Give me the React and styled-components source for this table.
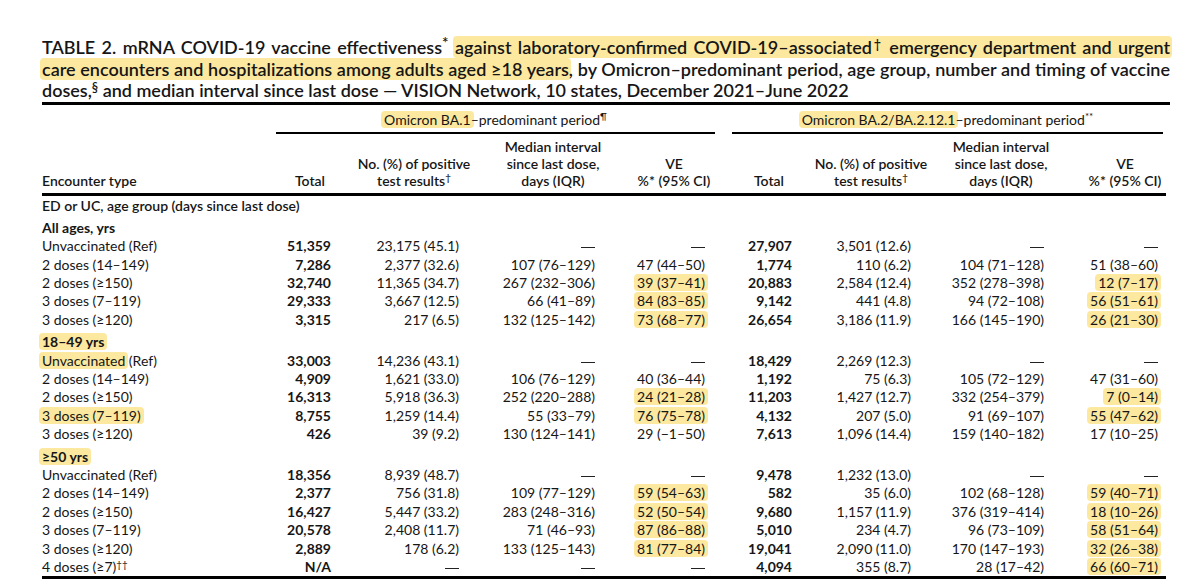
import React from "react";
import styled, { createGlobalStyle } from "styled-components";

const GlobalStyle = createGlobalStyle`
  html, body {
    margin: 0;
    padding: 0;
    background: #ffffff;
  }
  body {
    font-family: Lato, "Open Sans", sans-serif;
    color: #161616;
  }
`;

const GRID = "208px 81px 140px 157px 83px 81px 139px 119px 116px";

// per column: data padding-right, header alignment and shifts
const COLS = [
    { pr: 0, halign: "left", hpl: 0, hpr: 0 },
    { pr: 0, halign: "right", hpl: 0, hpr: 6 },
    { pr: 12, halign: "center", hpl: 26, hpr: 0 },
    { pr: 33, halign: "center", hpl: 7, hpr: 0 },
    { pr: 6, halign: "center", hpl: 9, hpr: 0 },
    { pr: 0, halign: "right", hpl: 0, hpr: 8 },
    { pr: 20, halign: "center", hpl: 19, hpr: 0 },
    { pr: 6, halign: "center", hpl: 21, hpr: 0 },
    { pr: 8, halign: "center", hpl: 34, hpr: 0 },
];

const Page = styled.div`
    width: 1200px;
    height: 582px;
    overflow: hidden;
    box-sizing: border-box;
    padding: 37px 0 0 42px;
`;

const Title = styled.div`
    width: 1128px;
    font-size: 18px;
    font-weight: 600;
    line-height: 21.5px;
    border-bottom: 3px solid #000;
`;

const TitleLine = styled.div`
    text-align: left;
    text-align-last: ${(p) => (p.$justify ? "justify" : "left")};
`;

const Mark = styled.span`
    background: #fce89f;
    border-radius: 4px;
    padding: 0 ${(p) => p.$px ?? 3}px;
    margin: 0 -${(p) => p.$px ?? 3}px;
    box-decoration-break: clone;
`;

const Sup = styled.span`
    position: relative;
    top: -0.42em;
    font-size: ${(p) => p.$size || 0.7}em;
    line-height: 0;
`;

const Dash = styled.span`
    display: inline-block;
    width: 14px;
    height: 0;
    border-top: 1.2px solid #222;
    vertical-align: middle;
`;

const Table = styled.div`
    width: 1124px;
    font-size: 14px;
    border-bottom: 3px solid #000;
`;

const GroupRow = styled.div`
    display: grid;
    grid-template-columns: 208px 461px 455px;
    padding-top: 6px;
`;

const GroupHead = styled.div`
    grid-column: ${(p) => p.$col};
    margin: 0 ${(p) => p.$mr}px 0 ${(p) => p.$ml}px;
    text-align: center;
    line-height: 17px;
    padding-bottom: 4px;
    border-bottom: 2.5px solid #000;
`;

const HeadRow = styled.div`
    display: grid;
    grid-template-columns: ${GRID};
    align-items: end;
    margin-top: 4px;
    padding-bottom: 4px;
    border-bottom: 3px solid #000;
    font-weight: 600;
    line-height: 17px;
`;

const HeadCell = styled.div`
    text-align: ${(p) => p.$align};
    padding-left: ${(p) => p.$pl}px;
    padding-right: ${(p) => p.$pr}px;
    white-space: nowrap;
`;

const CategoryRow = styled.div`
    height: 18.4px;
    line-height: 18.4px;
    margin-top: 1px;
    font-weight: 600;
`;

const SectionRow = styled.div`
    height: 18.4px;
    line-height: 18.4px;
    margin-top: ${(p) => p.$mt}px;
    font-weight: 700;
`;

const Row = styled.div`
    display: grid;
    grid-template-columns: ${GRID};
    height: 18.4px;
    line-height: 18.4px;
    white-space: nowrap;
`;

const Cell = styled.div`
    text-align: ${(p) => (p.$left ? "left" : "right")};
    padding-right: ${(p) => p.$pr}px;
    font-weight: ${(p) => (p.$bold ? 700 : 400)};
`;

const D = "—";

const sections = [
    {
        label: "All ages, yrs",
        hl: false,
        mt: 4,
        rows: [
            ["Unvaccinated (Ref)", "51,359", "23,175 (45.1)", D, D, "27,907", "3,501 (12.6)", D, D],
            ["2 doses (14–149)", "7,286", "2,377 (32.6)", "107 (76–129)", "47 (44–50)", "1,774", "110 (6.2)", "104 (71–128)", "51 (38–60)"],
            ["2 doses (≥150)", "32,740", "11,365 (34.7)", "267 (232–306)", "!39 (37–41)", "20,883", "2,584 (12.4)", "352 (278–398)", "!12 (7–17)"],
            ["3 doses (7–119)", "29,333", "3,667 (12.5)", "66 (41–89)", "!84 (83–85)", "9,142", "441 (4.8)", "94 (72–108)", "!56 (51–61)"],
            ["3 doses (≥120)", "3,315", "217 (6.5)", "132 (125–142)", "!73 (68–77)", "26,654", "3,186 (11.9)", "166 (145–190)", "!26 (21–30)"],
        ],
    },
    {
        label: "18–49 yrs",
        hl: true,
        mt: 4,
        rows: [
            [[<Mark key="m">Unvaccinated</Mark>, " (Ref)"], "33,003", "14,236 (43.1)", D, D, "18,429", "2,269 (12.3)", D, D],
            ["2 doses (14–149)", "4,909", "1,621 (33.0)", "106 (76–129)", "40 (36–44)", "1,192", "75 (6.3)", "105 (72–129)", "47 (31–60)"],
            ["2 doses (≥150)", "16,313", "5,918 (36.3)", "252 (220–288)", "!24 (21–28)", "11,203", "1,427 (12.7)", "332 (254–379)", "!7 (0–14)"],
            ["!3 doses (7–119)", "8,755", "1,259 (14.4)", "55 (33–79)", "!76 (75–78)", "4,132", "207 (5.0)", "91 (69–107)", "!55 (47–62)"],
            ["3 doses (≥120)", "426", "39 (9.2)", "130 (124–141)", "29 (−1–50)", "7,613", "1,096 (14.4)", "159 (140–182)", "17 (10–25)"],
        ],
    },
    {
        label: "≥50 yrs",
        hl: true,
        mt: 4,
        rows: [
            ["Unvaccinated (Ref)", "18,356", "8,939 (48.7)", D, D, "9,478", "1,232 (13.0)", D, D],
            ["2 doses (14–149)", "2,377", "756 (31.8)", "109 (77–129)", "!59 (54–63)", "582", "35 (6.0)", "102 (68–128)", "!59 (40–71)"],
            ["2 doses (≥150)", "16,427", "5,447 (33.2)", "283 (248–316)", "!52 (50–54)", "9,680", "1,157 (11.9)", "376 (319–414)", "!18 (10–26)"],
            ["3 doses (7–119)", "20,578", "2,408 (11.7)", "71 (46–93)", "!87 (86–88)", "5,010", "234 (4.7)", "96 (73–109)", "!58 (51–64)"],
            ["3 doses (≥120)", "2,889", "178 (6.2)", "133 (125–143)", "!81 (77–84)", "19,041", "2,090 (11.0)", "170 (147–193)", "!32 (26–38)"],
            [["4 doses (≥7)", <Sup key="s">††</Sup>], "N/A", D, D, D, "4,094", "355 (8.7)", "28 (17–42)", "!66 (60–71)"],
        ],
    },
];

const headers = [
    ["Encounter type"],
    ["Total"],
    ["No. (%) of positive", <>test results<Sup>†</Sup></>],
    ["Median interval", "since last dose,", "days (IQR)"],
    ["VE", "%* (95% CI)"],
    ["Total"],
    ["No. (%) of positive", <>test results<Sup>†</Sup></>],
    ["Median interval", "since last dose,", "days (IQR)"],
    ["VE", "%* (95% CI)"],
];

const renderValue = (v) => {
    if (v === D) return <Dash />;
    if (typeof v === "string" && v.startsWith("!")) {
        return <Mark>{v.slice(1)}</Mark>;
    }
    return v;
};

const DataRow = ({ cells }) => (
    <Row>
        {cells.map((v, i) => (
            <Cell key={i} $left={i === 0} $pr={COLS[i].pr} $bold={i === 1 || i === 5}>
                {renderValue(v)}
            </Cell>
        ))}
    </Row>
);

const App = () => {
    return (
        <Page>
            <GlobalStyle />
            <Title>
                <TitleLine $justify>
                    TABLE 2. mRNA COVID-19 vaccine effectiveness<Sup $size={0.85}>*</Sup>{" "}
                    <Mark $px={2}>against laboratory-confirmed COVID-19–associated<Sup>†</Sup> emergency department and urgent</Mark>
                </TitleLine>
                <TitleLine $justify>
                    <Mark $px={2}>care encounters and hospitalizations among adults aged ≥18 years</Mark>, by Omicron–predominant period, age group, number and timing of vaccine
                </TitleLine>
                <TitleLine>
                    doses,<Sup>§</Sup> and median interval since last dose — VISION Network, 10 states, December 2021–June 2022
                </TitleLine>
            </Title>
            <Table>
                <GroupRow>
                    <GroupHead $col="2" $ml={26} $mr={-4}>
                        <Mark>Omicron BA.1</Mark>–predominant period<Sup>¶</Sup>
                    </GroupHead>
                    <GroupHead $col="3" $ml={21} $mr={3}>
                        <Mark>Omicron BA.2/BA.2.12.1</Mark>–predominant period<Sup>**</Sup>
                    </GroupHead>
                </GroupRow>
                <HeadRow>
                    {headers.map((lines, i) => (
                        <HeadCell key={i} $align={COLS[i].halign} $pl={COLS[i].hpl} $pr={COLS[i].hpr}>
                            {lines.map((l, j) => (
                                <div key={j}>{l}</div>
                            ))}
                        </HeadCell>
                    ))}
                </HeadRow>
                <CategoryRow>ED or UC, age group (days since last dose)</CategoryRow>
                {sections.map((s) => (
                    <React.Fragment key={s.label}>
                        <SectionRow $mt={s.mt}>{s.hl ? <Mark>{s.label}</Mark> : s.label}</SectionRow>
                        {s.rows.map((r, k) => (
                            <DataRow key={k} cells={r} />
                        ))}
                    </React.Fragment>
                ))}
            </Table>
        </Page>
    );
};

export default App;
